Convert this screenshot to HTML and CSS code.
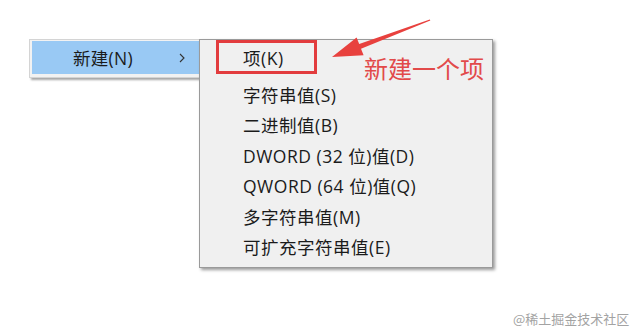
FILE: index.html
```html
<!DOCTYPE html>
<html lang="zh-CN">
<head>
    <meta charset="UTF-8">
    <meta name="viewport" content="width=device-width, initial-scale=1.0">
    <title>新建项</title>
    <link rel="stylesheet" href="styles.css">
</head>
<body>
    <div class="stage">
        <!-- 父菜单：新建(N) -->
        <div class="parent-menu">
            <div class="parent-item">
                <span class="parent-label">新建(N)</span>
                <svg class="chevron" width="6" height="10" viewBox="0 0 6 10">
                    <polyline points="1,1 5,5 1,9" fill="none" stroke="#333" stroke-width="1.1"/>
                </svg>
            </div>
        </div>

        <!-- 子菜单 -->
        <div class="submenu">
            <div class="item item-first">项(K)</div>
            <div class="items">
                <div class="item">字符串值(S)</div>
                <div class="item">二进制值(B)</div>
                <div class="item">DWORD (32 位)值(D)</div>
                <div class="item">QWORD (64 位)值(Q)</div>
                <div class="item">多字符串值(M)</div>
                <div class="item">可扩充字符串值(E)</div>
            </div>
        </div>

        <!-- 标注 -->
        <div class="mark-box"></div>
        <svg class="mark-arrow" width="639" height="100" viewBox="0 0 639 100">
            <polygon points="429.8,19.4 359.2,44.1 356.6,37.6 332,57 363.6,55.2 361,48.7 430.3,20.6" fill="#e8413e"/>
        </svg>
        <div class="mark-text">新建一个项</div>

        <div class="watermark">@稀土掘金技术社区</div>
    </div>
</body>
</html>
```

FILE: styles.css
```css
body {
    margin: 0;
    background: #fff;
    font-family: "Open Sans", "Noto Sans CJK SC", sans-serif;
    color: #1b1b1b;
}
.stage {
    position: relative;
    width: 639px;
    height: 329px;
    overflow: hidden;
}
.parent-menu {
    position: absolute;
    left: 29px;
    top: 39px;
    width: 180px;
    height: 35px;
    padding: 1px 2px;
    background: #f2f2f2;
    border: 1px solid #d4d4d4;
    box-shadow: 2px 2px 2px rgba(0, 0, 0, 0.35);
}
.parent-item {
    display: flex;
    align-items: center;
    height: 33px;
    background: #99c9f4;
}
.parent-label {
    margin-left: 41px;
    font-size: 17.5px;
    letter-spacing: 0.3px;
}
.chevron {
    margin-left: 46px;
}
.submenu {
    position: absolute;
    left: 199px;
    top: 39px;
    width: 292px;
    height: 227px;
    background: #f0f0f0;
    border: 1px solid #9a9a9a;
    box-shadow: 2px 2px 3px rgba(0, 0, 0, 0.4);
}
.item {
    display: flex;
    align-items: center;
    height: 30.5px;
    padding-left: 43px;
    font-size: 17.5px;
    letter-spacing: 0.5px;
}
.item-first {
    height: 34px;
    margin-bottom: 5px;
}
.mark-box {
    position: absolute;
    left: 216px;
    top: 40px;
    width: 95px;
    height: 28px;
    border: 3px solid #e23c3e;
}
.mark-arrow {
    position: absolute;
    left: 0;
    top: 0;
}
.mark-text {
    position: absolute;
    left: 364px;
    top: 52px;
    font-family: "Noto Sans CJK SC", sans-serif;
    font-size: 24px;
    line-height: 32px;
    color: #e24a4a;
}
.watermark {
    position: absolute;
    left: 513px;
    top: 309px;
    font-family: "Noto Sans CJK SC", sans-serif;
    font-size: 13px;
    color: #a3a3a3;
}
```
